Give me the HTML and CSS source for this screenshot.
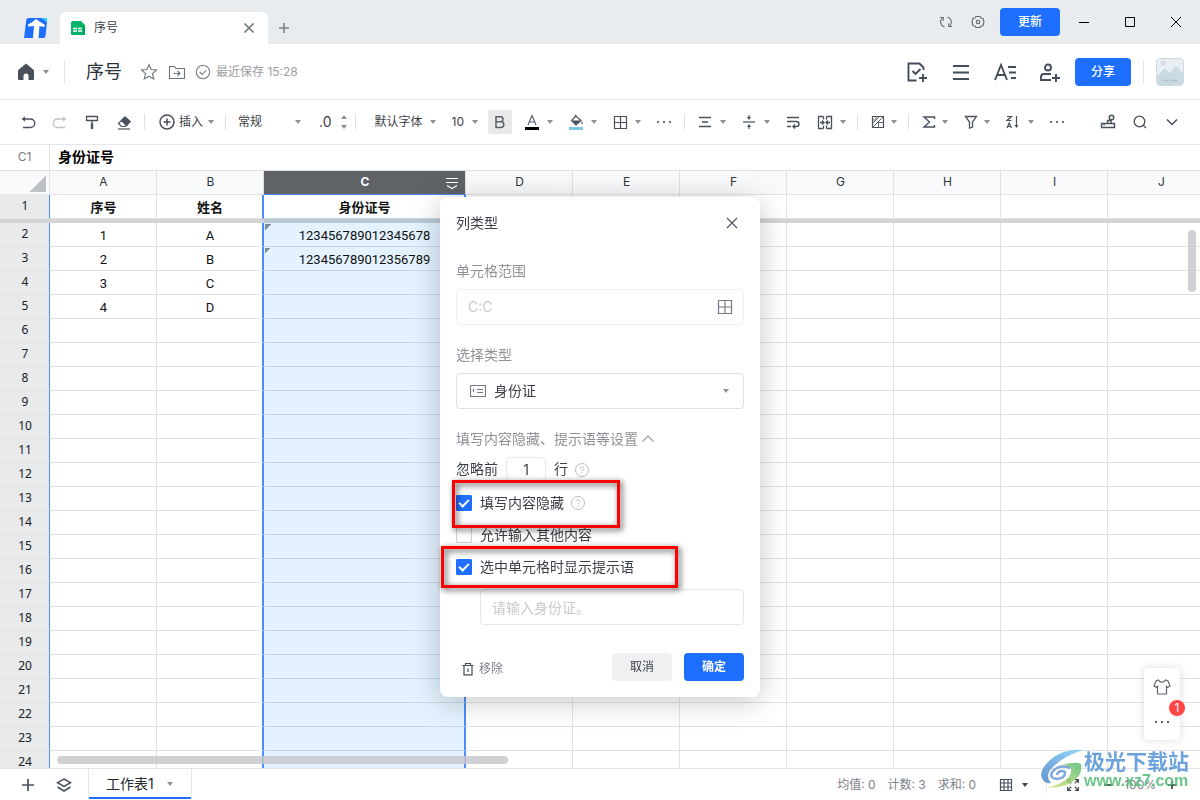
FILE: index.html
```html
<!DOCTYPE html>
<html lang="zh-CN">
<head>
<meta charset="utf-8">
<title>序号</title>
<link rel="stylesheet" href="styles.css">
</head>
<body>
<svg class="defs" aria-hidden="true">
  <symbol id="caret" viewBox="0 0 8 8"><path d="M1 2h6L4 6z" fill="currentColor"/></symbol>
  <symbol id="dots" viewBox="0 0 20 20"><path d="M3 9h2v2H3zM9 9h2v2H9zM15 9h2v2h-2z" fill="currentColor"/></symbol>
  <symbol id="help" viewBox="0 0 16 16"><g fill="none" stroke="currentColor"><circle cx="8" cy="8" r="6.5"/><path d="M6.2 6.6c0-2.4 3.6-2.2 3.6 0 0 1.2-1.8 1.3-1.8 2.6M8 10.2v1.2"/></g></symbol>
  <symbol id="colmenu" viewBox="0 0 14 14"><path d="M1 2.5h12M1 6.5h12M2 9.5l5 3 5-3" fill="none" stroke="currentColor" stroke-width="1.2"/></symbol>
</svg>

<header class="titlebar">
  <svg class="logo" viewBox="0 0 24 22"><path d="M4.500 1H18l5 4-1.500 14q-.2 2-2 2H0L2.300 3Q2.500 1 4.500 1z" fill="#1e6fff"/><path d="M18 1h4q1.500 0 1.200 1.500L22.800 5z" fill="#1fd0f0"/><path d="M4 7.500q4-1.500 8-5.500l9 6-1 2-4.500-1L14.500 21H9l1-12-6 .5z" fill="#fff"/></svg>
  <div class="tab">
    <svg class="i16" viewBox="0 0 16 16"><path d="M3 1h8l4 4v9a1 1 0 0 1-1 1H2a1 1 0 0 1-1-1V3q0-2 2-2z" fill="#07b368"/><path d="M13.500 1.500v5H15V15h-1.500z" fill="#049a58"/><path d="M3 8.500h4M8 8.500h4M3 11h4M8 11h4" stroke="#fff" stroke-width="1.400"/></svg>
    <span class="tab-name">序号</span>
    <button class="plain" aria-label="关闭标签"><svg class="i16" viewBox="0 0 16 16"><path d="M3.500 3.500l9 9M12.500 3.500l-9 9" stroke="#6f7680" stroke-width="1.700"/></svg></button>
  </div>
  <button class="plain" aria-label="新建标签"><svg class="i16" viewBox="0 0 16 16"><path d="M8 3v10M3 8h10" stroke="#7c828b" stroke-width="1.600"/></svg></button>
  <div class="window-tools">
    <button class="plain" aria-label="刷新"><svg class="i16" viewBox="0 0 16 16" fill="none" stroke="#62676f" stroke-width="1.100"><path d="M6.500 13A5.300 5.300 0 0 1 4 4.300M2 3.500h3.300v3.300M9.500 3a5.300 5.300 0 0 1 2.500 8.700M14 12.500h-3.300V9.200"/></svg></button>
    <button class="plain" aria-label="设置"><svg class="i16" viewBox="0 0 16 16" fill="none" stroke="#62676f" stroke-width="1.100"><path d="M6 2.500h4l1 1.600 2 .2L14 8l-1 3.700-2 .2-1 1.600H6l-1-1.600-2-.2L2 8l1-3.700 2-.2z"/><circle cx="8" cy="8" r="1.700"/></svg></button>
  </div>
  <button class="primary update">更新</button>
  <div class="window-buttons">
    <button class="plain" aria-label="最小化"><svg class="i16" viewBox="0 0 16 16"><path d="M3 8.500h10" stroke="#000"/></svg></button>
    <button class="plain" aria-label="最大化"><svg class="i16" viewBox="0 0 16 16"><path d="M3.500 3.500h9v9h-9z" fill="none" stroke="#000"/></svg></button>
    <button class="plain" aria-label="关闭"><svg class="i16" viewBox="0 0 16 16"><path d="M3 3l10 10M13 3L3 13" stroke="#000"/></svg></button>
  </div>
</header>

<header class="docbar">
  <button class="plain home" aria-label="首页"><svg class="i20" viewBox="0 0 20 20"><path d="M10 1.500l8 6.800V17a1 1 0 0 1-1 1h-4.500v-4a2.500 2.500 0 0 0-5 0v4H3a1 1 0 0 1-1-1V8.300z" fill="#4a505b"/></svg><svg class="caret"><use href="#caret"/></svg></button>
  <span class="vline"></span>
  <h1 class="doc-title">序号</h1>
  <div class="doc-actions">
    <button class="plain" aria-label="收藏"><svg class="i20" viewBox="0 0 20 20"><path d="M10 2.500l2.200 5 5.300.5-4 3.600 1.200 5.400-4.700-2.800L5.300 17l1.200-5.400-4-3.600 5.300-.5z" fill="none" stroke="#6d7480" stroke-width="1.100"/></svg></button>
    <button class="plain" aria-label="移动"><svg class="i20" viewBox="0 0 20 20" fill="none" stroke="#6d7480" stroke-width="1.100"><path d="M2.500 16.500v-12h5l1.500 2h8.500v10zM6.500 11.500h6M10.500 9l2.500 2.500-2.500 2.500"/></svg></button>
  </div>
  <span class="saved"><svg class="i16" viewBox="0 0 16 16" fill="none" stroke="#7b818b" stroke-width="1.100"><circle cx="8" cy="8" r="6.700"/><path d="M4.800 8l2.500 2.500 4-4.300"/></svg>最近保存 15:28</span>
  <div class="doc-tools">
    <button class="plain" aria-label="待办"><svg class="i24" viewBox="0 0 24 24" fill="none" stroke="#454c59" stroke-width="1.900"><path d="M18.500 10V7.500l-4-4H3.500v17h8M7.500 11l3 3 5-5M18 14v8M14 18h8"/></svg></button>
    <button class="plain" aria-label="菜单"><svg class="i24" viewBox="0 0 24 24"><path d="M4 6h16M4 12.500h16M4 19h16" stroke="#454c59" stroke-width="1.900"/></svg></button>
    <button class="plain" aria-label="文字"><svg class="i24" viewBox="0 0 24 24" fill="none" stroke="#454c59" stroke-width="1.900"><path d="M2 20L8 5l6 15M4 15h8M15 7h8M16 12.500h7M18 18h5"/></svg></button>
    <button class="plain" aria-label="协作者"><svg class="i24" viewBox="0 0 24 24" fill="none" stroke="#454c59" stroke-width="1.900"><circle cx="11" cy="7.500" r="3"/><path d="M14 20H4v-3q0-3 3-3h7M19 14v8M15 18h8"/></svg></button>
  </div>
  <button class="primary share">分享</button>
  <span class="vline"></span>
  <svg class="avatar" viewBox="0 0 28 28"><rect x=".5" y=".5" width="27" height="27" rx="3.500" fill="#e9eff3" stroke="#cddce2"/><circle cx="7" cy="5" r="2.500" fill="#cfdde4"/><path d="M1 18l8-8 5 5 6-7 7 7v9q0 3-3 3H4q-3 0-3-3z" fill="#c9dae2"/><path d="M6 22.500h2M9 22.500h3M13 22.500h2M16 22.500h6" stroke="#adc0c9" stroke-width="1.500"/></svg>
</header>

<div class="toolbar" role="toolbar">
  <div class="group">
    <button class="plain" aria-label="撤销"><svg class="i20" viewBox="0 0 20 20"><path d="M5 7h7.500a4 4 0 0 1 0 8.500H5" fill="none" stroke="#4a505c" stroke-width="1.400"/><path d="M3.500 7l3.500-2.500v5z" fill="#4a505c"/></svg></button>
    <button class="plain" aria-label="重做"><svg class="i20" viewBox="0 0 20 20"><path d="M15 7H7.500a4 4 0 0 0 0 8.500H15" fill="none" stroke="#bfc2c7" stroke-width="1.400"/><path d="M16.500 7L13 4.500v5z" fill="#bfc2c7"/></svg></button>
    <button class="plain" aria-label="格式刷"><svg class="i20" viewBox="0 0 20 20" fill="none" stroke="#4a505c" stroke-width="1.300"><path d="M4.500 4.500h11v4h-11zM10 8.500V12"/><path d="M10 11.500V17" stroke-width="2.400"/></svg></button>
    <button class="plain" aria-label="清除格式"><svg class="i20" viewBox="0 0 20 20" fill="none" stroke="#4a505c" stroke-width="1.200"><path d="M4.500 11.500L11 5l5 4.500-5 5H7.500z"/><path d="M7.500 8.500L11 5l5 4.500-3.500 4z" fill="#4a505c"/><path d="M4 17h12"/></svg></button>
  </div>
  <span class="sep"></span>
  <button class="plain insert"><svg class="i20" viewBox="0 0 20 20" fill="none" stroke="#4a505c" stroke-width="1.500"><circle cx="10" cy="10" r="7"/><path d="M10 6.500v7M6.500 10h7"/></svg><span>插入</span><svg class="caret"><use href="#caret"/></svg></button>
  <span class="sep"></span>
  <label class="pick pick-format"><select aria-label="数字格式"><option>常规</option></select><svg class="caret"><use href="#caret"/></svg></label>
  <button class="plain decimals" aria-label="小数位数"><span>.0</span><svg viewBox="0 0 8 16" width="8" height="16"><path d="M1 5h6L4 1zM1 11h6l-3 4z" fill="#8d9196"/></svg></button>
  <span class="sep"></span>
  <label class="pick pick-font"><select aria-label="字体"><option>默认字体</option></select><svg class="caret"><use href="#caret"/></svg></label>
  <label class="pick pick-size"><select aria-label="字号"><option>10</option></select><svg class="caret"><use href="#caret"/></svg></label>
  <button class="bold" aria-label="加粗" aria-pressed="true"><svg class="i20" viewBox="0 0 20 20"><path d="M6 4.800h4.500a2.500 2.500 0 0 1 0 5H6zm0 5h5a2.800 2.800 0 0 1 0 5.600H6z" fill="none" stroke="#5a606b" stroke-width="1.500"/></svg></button>
  <div class="group">
    <button class="plain drop" aria-label="字体颜色"><svg class="i20" viewBox="0 0 20 20"><path d="M6 13L10 3.500 14 13M7.500 10h5" fill="none" stroke="#5a606b" stroke-width="1.200"/><path d="M3 15h14v3H3z"/></svg><svg class="caret"><use href="#caret"/></svg></button>
    <button class="plain drop" aria-label="填充颜色"><svg class="i20" viewBox="0 0 20 20"><path d="M10 4L5.500 8.500l4.500 4.500 5-4.500zM9 3l2 2" fill="none" stroke="#4a505c" stroke-width="1.200"/><path d="M5.500 8.500h9.500l-5 4.500zM16 9q1.500 3 0 3t0-3" fill="#4a505c"/><path d="M3 15h14v3H3z" fill="#77cbe8"/></svg><svg class="caret"><use href="#caret"/></svg></button>
    <button class="plain drop" aria-label="边框"><svg class="i20" viewBox="0 0 20 20"><path d="M4.500 4.500h12v12h-12zM10.500 4.500v12M4.500 10.500h12" fill="none" stroke="#4a505c" stroke-width="1.200"/></svg><svg class="caret"><use href="#caret"/></svg></button>
    <button class="plain" aria-label="更多样式"><svg class="i20"><use href="#dots"/></svg></button>
  </div>
  <span class="sep"></span>
  <div class="group">
    <button class="plain drop" aria-label="水平对齐"><svg class="i20" viewBox="0 0 20 20"><path d="M4 5.500h12M7 10h6M4 14.500h12" stroke="#4a505c" stroke-width="1.400"/></svg><svg class="caret"><use href="#caret"/></svg></button>
    <button class="plain drop" aria-label="垂直对齐"><svg class="i20" viewBox="0 0 20 20"><path d="M4 10h12M10 3v3M10 14v3" stroke="#6b717b" stroke-width="1.400"/><path d="M8 5h4l-2 3zM8 15h4l-2-3z" fill="#4a505c"/></svg><svg class="caret"><use href="#caret"/></svg></button>
    <button class="plain" aria-label="自动换行"><svg class="i20" viewBox="0 0 20 20" fill="none" stroke="#4a505c" stroke-width="1.400"><path d="M4 5.500h12M4 9.500h9.500a2.500 2.500 0 0 1 0 5H10M12 12.500l-2 2 2 2M4 14.500h4"/></svg></button>
    <button class="plain drop" aria-label="合并单元格"><svg class="i20" viewBox="0 0 20 20" fill="none" stroke="#4a505c" stroke-width="1.300"><path d="M8.500 4.500h-5v12h5M11.500 4.500h5v12h-5M8.500 4.500v3M11.500 4.500v3M8.500 13.500v3M11.500 13.500v3M5 10.500h3.500M15 10.500h-3.500M7 8.500l2 2-2 2M13 8.500l-2 2 2 2"/></svg><svg class="caret"><use href="#caret"/></svg></button>
  </div>
  <span class="sep"></span>
  <button class="plain drop tight" aria-label="条件格式"><svg class="i20" viewBox="0 0 20 20" fill="none" stroke="#5f6570"><path d="M4.500 4.500h11v11h-11z" stroke="#4a505c" stroke-width="1.200"/><path d="M10.500 10v5.500M10 10.500h5.500M8 4.500v3M4.500 8h3M4.500 15.500l11-11M4.500 11.500l7-7"/></svg><svg class="caret"><use href="#caret"/></svg></button>
  <span class="sep"></span>
  <div class="group">
    <button class="plain drop tight" aria-label="求和"><svg class="i20" viewBox="0 0 20 20"><path d="M15.500 7V5H5l5.500 5L5 15h10.500v-2" fill="none" stroke="#4a505c" stroke-width="1.400"/></svg><svg class="caret"><use href="#caret"/></svg></button>
    <button class="plain drop tight" aria-label="筛选"><svg class="i20" viewBox="0 0 20 20"><path d="M4.500 4.500h11L11.500 10v5l-3 1v-6z" fill="none" stroke="#4a505c" stroke-width="1.300"/></svg><svg class="caret"><use href="#caret"/></svg></button>
    <button class="plain drop" aria-label="排序"><svg class="i20" viewBox="0 0 20 20" fill="none" stroke="#4a505c" stroke-width="1.200"><path d="M4 4.500h4.500L4 8.500h4.500M4 16l2.200-5 2.300 5M5 14.500h2.500M13.500 4v11"/><path d="M11.500 13h4l-2 3z" fill="#4a505c" stroke="none"/></svg><svg class="caret"><use href="#caret"/></svg></button>
    <button class="plain" aria-label="更多"><svg class="i20"><use href="#dots"/></svg></button>
  </div>
  <div class="group group-end">
    <button class="plain" aria-label="画笔"><svg class="i20" viewBox="0 0 20 20" fill="none" stroke="#4a505c" stroke-width="1.400"><path d="M3.500 11.500h13v4h-13zM9.500 11.500v-3h4M6 11.500v2"/><circle cx="13.500" cy="5.500" r="2.300"/><path d="M13 8v3.500"/></svg></button>
    <button class="plain" aria-label="搜索"><svg class="i20" viewBox="0 0 20 20" fill="none" stroke="#4a505c" stroke-width="1.300"><circle cx="9.500" cy="9.500" r="5.300"/><path d="M13 13l3 3"/></svg></button>
    <button class="plain" aria-label="收起"><svg class="i20" viewBox="0 0 20 20"><path d="M5 7.500l5 5 5-5" fill="none" stroke="#4a505c" stroke-width="1.500"/></svg></button>
  </div>
</div>

<div class="formula-bar"><span class="cell-name">C1</span><span class="cell-value">身份证号</span></div>

<main class="sheet">
  <table class="grid">
    <colgroup><col class="c-head"><col><col><col class="c-wide"><col><col><col><col><col><col><col></colgroup>
    <thead>
      <tr><th class="corner"></th><th>A</th><th>B</th><th class="picked">C<svg class="colmenu"><use href="#colmenu"/></svg></th><th>D<svg class="colmenu faint"><use href="#colmenu"/></svg></th><th>E</th><th>F</th><th>G</th><th>H</th><th>I</th><th>J</th></tr>
    </thead>
    <tbody>
      <tr class="first"><th>1</th><td>序号</td><td>姓名</td><td>身份证号</td><td></td><td></td><td></td><td></td><td></td><td></td><td></td></tr>
      <tr class="freeze"><td></td><td></td><td></td><td></td><td></td><td></td><td></td><td></td><td></td><td></td><td></td></tr>
      <tr><th>2</th><td>1</td><td>A</td><td class="as-text">123456789012345678</td><td></td><td></td><td></td><td></td><td></td><td></td><td></td></tr>
      <tr><th>3</th><td>2</td><td>B</td><td class="as-text">123456789012356789</td><td></td><td></td><td></td><td></td><td></td><td></td><td></td></tr>
      <tr><th>4</th><td>3</td><td>C</td><td></td><td></td><td></td><td></td><td></td><td></td><td></td><td></td></tr>
      <tr><th>5</th><td>4</td><td>D</td><td></td><td></td><td></td><td></td><td></td><td></td><td></td><td></td></tr>
      <tr><th>6</th><td></td><td></td><td></td><td></td><td></td><td></td><td></td><td></td><td></td><td></td></tr>
      <tr><th>7</th><td></td><td></td><td></td><td></td><td></td><td></td><td></td><td></td><td></td><td></td></tr>
      <tr><th>8</th><td></td><td></td><td></td><td></td><td></td><td></td><td></td><td></td><td></td><td></td></tr>
      <tr><th>9</th><td></td><td></td><td></td><td></td><td></td><td></td><td></td><td></td><td></td><td></td></tr>
      <tr><th>10</th><td></td><td></td><td></td><td></td><td></td><td></td><td></td><td></td><td></td><td></td></tr>
      <tr><th>11</th><td></td><td></td><td></td><td></td><td></td><td></td><td></td><td></td><td></td><td></td></tr>
      <tr><th>12</th><td></td><td></td><td></td><td></td><td></td><td></td><td></td><td></td><td></td><td></td></tr>
      <tr><th>13</th><td></td><td></td><td></td><td></td><td></td><td></td><td></td><td></td><td></td><td></td></tr>
      <tr><th>14</th><td></td><td></td><td></td><td></td><td></td><td></td><td></td><td></td><td></td><td></td></tr>
      <tr><th>15</th><td></td><td></td><td></td><td></td><td></td><td></td><td></td><td></td><td></td><td></td></tr>
      <tr><th>16</th><td></td><td></td><td></td><td></td><td></td><td></td><td></td><td></td><td></td><td></td></tr>
      <tr><th>17</th><td></td><td></td><td></td><td></td><td></td><td></td><td></td><td></td><td></td><td></td></tr>
      <tr><th>18</th><td></td><td></td><td></td><td></td><td></td><td></td><td></td><td></td><td></td><td></td></tr>
      <tr><th>19</th><td></td><td></td><td></td><td></td><td></td><td></td><td></td><td></td><td></td><td></td></tr>
      <tr><th>20</th><td></td><td></td><td></td><td></td><td></td><td></td><td></td><td></td><td></td><td></td></tr>
      <tr><th>21</th><td></td><td></td><td></td><td></td><td></td><td></td><td></td><td></td><td></td><td></td></tr>
      <tr><th>22</th><td></td><td></td><td></td><td></td><td></td><td></td><td></td><td></td><td></td><td></td></tr>
      <tr><th>23</th><td></td><td></td><td></td><td></td><td></td><td></td><td></td><td></td><td></td><td></td></tr>
      <tr><th>24</th><td></td><td></td><td></td><td></td><td></td><td></td><td></td><td></td><td></td><td></td></tr>
    </tbody>
  </table>
  <div class="scroll-x"></div>
  <div class="scroll-y"></div>
  <aside class="float-tools">
    <button class="plain" aria-label="皮肤"><svg class="i20" viewBox="0 0 20 20"><path d="M6.500 3l1 1.300q2.500 1.600 5 0l1-1.300 2.500 1 2 5-2.500 1.500-1-1V17h-9V9.500l-1 1L2 9l2-5z" fill="none" stroke="#5f6570" stroke-width="1.200"/></svg></button>
    <button class="plain" aria-label="更多工具"><svg class="i20"><use href="#dots"/></svg></button>
    <span class="badge">1</span>
  </aside>
</main>

<footer class="statusbar">
  <div class="sheet-tools">
    <button class="plain" aria-label="添加工作表"><svg class="i20" viewBox="0 0 20 20"><path d="M10 4v12M4 10h12" stroke="#4a505c" stroke-width="1.700"/></svg></button>
    <button class="plain" aria-label="全部工作表"><svg class="i20" viewBox="0 0 20 20" fill="none" stroke="#4a505c" stroke-width="1.500"><path d="M10 4l6.500 3.700L10 11.500 3.500 7.700zM3.500 12L10 16l6.500-4"/></svg></button>
  </div>
  <button class="sheet-tab">工作表1<svg class="caret"><use href="#caret"/></svg></button>
  <div class="stats"><span>均值: 0</span><span>计数: 3</span><span>求和: 0</span></div>
  <button class="plain view-mode" aria-label="视图"><svg class="i16" viewBox="0 0 16 16" fill="none" stroke="#4a505c" stroke-width="1.200"><path d="M2.500 2.500h11v11h-11zM2.500 6h11M2.500 10h11M6 2.500v11M10 2.500v11"/></svg><svg class="caret"><use href="#caret"/></svg></button>
  <span class="vline short"></span>
  <button class="plain full" aria-label="全屏"><svg class="i16" viewBox="0 0 16 16" fill="none" stroke="#3f4550" stroke-width="1.200"><path d="M6 2.700H2.700V6M10 2.700h3.300V6M6 13.300H2.700V10M10 13.300h3.300V10M2.700 2.700L6.300 6.300M13.300 2.700L9.700 6.300M2.700 13.300l3.600-3.600M13.300 13.300L9.700 9.700"/></svg></button>
  <div class="zoom">
    <button class="plain" aria-label="缩小"><svg class="i16" viewBox="0 0 16 16"><path d="M4 8h8" stroke="#3f4550" stroke-width="1.700"/></svg></button>
    <span>100%</span>
    <button class="plain" aria-label="放大"><svg class="i16" viewBox="0 0 16 16"><path d="M4 8h8M8 4v8" stroke="#3f4550" stroke-width="1.700"/></svg></button>
  </div>
</footer>

<div class="layer">
  <form class="dialog" role="dialog" aria-labelledby="dlg-title">
    <div class="dialog-head"><h2 id="dlg-title">列类型</h2><button type="button" class="plain" aria-label="关闭对话框"><svg class="i16" viewBox="0 0 16 16"><path d="M3 3l10 10M13 3L3 13" stroke="#4a505c" stroke-width="1.100"/></svg></button></div>
    <label class="caption caption-first" for="range">单元格范围</label>
    <div class="field pale"><input id="range" type="text" placeholder="C:C" disabled><svg class="i16" viewBox="0 0 16 16"><path d="M1.500 1.500h13v13h-13zM8 1.500v13M1.500 8h13" fill="none" stroke="#747b86" stroke-width="1.200"/></svg></div>
    <label class="caption" for="kind">选择类型</label>
    <div class="field"><svg class="i16" viewBox="0 0 16 16"><path d="M.5 2.500h15v11H.5zM3.500 6v3M7 6.500h6M7 9.500h6" fill="none" stroke="#747b86" stroke-width="1.200"/></svg><select id="kind"><option>身份证</option></select><svg class="caret"><use href="#caret"/></svg></div>
    <button type="button" class="plain fold">填写内容隐藏、提示语等设置<svg viewBox="0 0 14 14" width="14" height="14"><path d="M1.500 9.500L7 4l5.500 5.500" fill="none" stroke="#a0a4aa" stroke-width="1.200"/></svg></button>
    <div class="skip"><label for="skip">忽略前</label><input id="skip" type="text" value="1"><span>行</span><svg class="i16 help"><use href="#help"/></svg></div>
    <div class="checks">
      <label class="check"><input type="checkbox" checked>填写内容隐藏<svg class="i16 help"><use href="#help"/></svg></label>
      <label class="check"><input type="checkbox">允许输入其他内容</label>
      <label class="check"><input type="checkbox" checked>选中单元格时显示提示语</label>
    </div>
    <input class="hint" type="text" placeholder="请输入身份证。" aria-label="提示语">
    <div class="dialog-foot">
      <button type="button" class="plain remove"><svg class="i16" viewBox="0 0 16 16" fill="none" stroke="#4a505c" stroke-width="1.200"><path d="M2.500 4.500h11M5.500 4V2.500h5V4M4 4.500v9.300h8V4.500M8 7.500v3.500"/></svg>移除</button>
      <button type="button" class="secondary">取消</button>
      <button type="button" class="primary ok">确定</button>
    </div>
    <div class="mark mark-hide"></div>
    <div class="mark mark-hint"></div>
  </form>
</div>

<div class="stamp">
  <svg viewBox="0 0 44 40" width="44" height="40"><defs><linearGradient id="sky" x1="1" y1="0" x2="0" y2="1"><stop offset="0" stop-color="#7cd3f8"/><stop offset="1" stop-color="#4f84cc"/></linearGradient><linearGradient id="leaf" x1="1" y1="0" x2="0" y2="1"><stop offset="0" stop-color="#55bd74"/><stop offset="1" stop-color="#e0e27a"/></linearGradient></defs><path d="M43 1Q24-1 10 11-3 23 3 31q3 4 8 3-7-8 3-17Q24 7 43 1z" fill="url(#sky)"/><path d="M22 16q14-4 19-1 2 9-6 16-10 8-29 8 17-4 23-11 5-8-1-11-3-1-6-1z" fill="url(#leaf)"/><path d="M30 19q-10-4-17 3-5 7 4 8 8-1 8-6 0-2-3-2-4 0-5 4" fill="none" stroke="#6a9bd6" stroke-width="2.500"/></svg>
  <div class="stamp-text"><span class="stamp-name">极光下载站</span><span class="stamp-url">www.xz7.com</span></div>
</div>
</body>
</html>
```
FILE: styles.css
```css
* { box-sizing: border-box; }
body {
  margin: 0;
  height: 100vh;
  display: flex;
  flex-direction: column;
  overflow: hidden;
  background: #fff;
  color: #3c4048;
  font: 12px/20px Inter, "Noto Sans CJK SC", sans-serif;
}
button, input, select { font: inherit; color: inherit; }
svg { display: block; flex: none; }
h1, h2 { margin: 0; font-weight: 400; }
.defs { position: absolute; width: 0; height: 0; }
.i16 { width: 16px; height: 16px; }
.i20 { width: 20px; height: 20px; }
.i24 { width: 24px; height: 24px; }
.caret { width: 8px; height: 8px; color: #8d9196; }
.plain { display: flex; align-items: center; padding: 0; border: 0; background: none; }
.primary { border: 0; border-radius: 4px; padding: 0; height: 28px; background: #1e6fff; color: #fff; font-weight: 500; }
.vline { width: 1px; height: 24px; background: #e6e7ea; }

/* window title bar */
.titlebar { display: flex; align-items: center; flex: none; height: 44px; padding: 0 16px 0 24px; background: #e9ecef; }
.logo { width: 24px; height: 22px; margin: 12px 12px 0 0; }
.tab { display: flex; align-items: center; align-self: flex-end; width: 208px; height: 32px; margin-right: 8px; padding: 0 11px 0 10px; border-radius: 6px 6px 0 0; background: #fff; }
.tab-name { flex: 1; margin-left: 8px; }
.titlebar > .plain { margin-top: 12px; }
.window-tools { display: flex; gap: 16px; margin: 0 14px 0 auto; }
.update { width: 60px; }
.window-buttons { display: flex; gap: 30px; margin-left: 16px; }

/* document bar */
.docbar { display: flex; align-items: center; flex: none; height: 56px; padding: 0 16px; border-bottom: 1px solid #e6e7ea; }
.home { gap: 6px; margin-right: 14px; }
.doc-title { margin: 0 17px 0 21px; font-size: 18px; line-height: 28px; color: #2b2f36; }
.doc-actions { display: flex; gap: 8px; }
.saved { display: flex; align-items: center; gap: 5px; margin-left: 8px; color: #9a9da3; }
.doc-tools { display: flex; gap: 20px; margin: 0 14px 0 auto; }
.share { width: 56px; margin-right: 12px; }
.avatar { width: 28px; height: 28px; margin-left: 12px; }

/* toolbar */
.toolbar { display: flex; align-items: center; flex: none; height: 45px; padding: 0 18px; border-bottom: 1px solid #e6e7ea; }
.group { display: flex; align-items: center; gap: 12px; color: #6b717b; }
.group-end { margin-left: auto; }
.sep { width: 1px; height: 16px; margin: 0 10px; background: #dfe0e3; }
.drop { gap: 4px; }
.tight { gap: 2px; }
.insert { margin-left: 2px; }
.insert span { margin: 0 4px 0 2px; }
.pick { display: flex; align-items: center; }
.pick select { appearance: none; flex: 1; min-width: 0; padding: 0; border: 0; background: none; }
.pick-format { width: 64px; margin: 0 17px 0 2px; }
.pick-font { width: 62px; margin: 0 15px 0 9px; }
.pick-size { width: 27px; margin-right: 9px; }
.decimals { gap: 8px; margin-right: -3px; font-size: 14px; }
.bold { display: flex; align-items: center; justify-content: center; width: 24px; height: 24px; margin-right: 10px; padding: 0; border: 0; border-radius: 2px; background: #e9e9ea; }

.formula-bar { display: flex; align-items: center; flex: none; height: 26px; border-bottom: 1px solid #dfe1e5; }
.cell-name { width: 50px; height: 25px; line-height: 24px; border-right: 1px solid #dfe1e5; text-align: center; color: #777b82; }
.cell-value { padding: 0 0 2px 8px; font-size: 14px; font-weight: 700; color: #000; }

/* grid */
.sheet { position: relative; flex: 1; min-height: 0; overflow: hidden; }
.grid { width: 100%; min-width: 1215px; table-layout: fixed; border-spacing: 0; }
.grid col { width: 107px; }
.grid .c-head { width: 50px; }
.grid .c-wide { width: 202px; }
.grid th, .grid td { height: 24px; padding: 0; border: 0 solid #e1e2e6; border-width: 0 1px 1px 0; line-height: 20px; text-align: center; font-weight: 400; color: #202124; }
.grid th { padding: 0 0 2px 1px; }
.grid thead th { position: relative; background: #f9fafc; color: #303338; }
.grid .corner { background: linear-gradient(135deg, transparent 50%, #bdc0c5 50%) 30px 5px / 16px 16px no-repeat #f9fafc; }
.grid thead .picked { background: #5f6368; color: #fff; font-weight: 700; border-bottom-color: #4b8df8; }
.colmenu { position: absolute; right: 6px; top: 5px; width: 14px; height: 14px; }
.faint { color: #fff; }
.grid tbody th { background: #e8eaec; border-right-color: #4b8df8; font-family: "Noto Sans", sans-serif; }
.grid tbody td { padding: 3px 0 0 1px; font: 13px/20px Roboto, "Noto Sans CJK SC", sans-serif; color: #111; }
.grid tbody td:nth-child(3), .grid tbody td:nth-child(4) { border-right: 2px solid #4b8df8; }
.grid tbody td:nth-child(4) { background-color: #e3f2fe; border-bottom-color: #c8d6e4; }
.grid tbody .first td { font-weight: 700; }
.grid tbody .first td:nth-child(4) { background: #fff; }
.grid tbody .freeze td { height: 4px; padding: 0; border-bottom: 0; border-right-color: #d4d4d4; background: #d4d4d4; line-height: 0; }
.grid tbody .freeze td:nth-child(4) { background: #b9c8d3; }
.grid .as-text { background: linear-gradient(135deg, #7b8da0 50%, transparent 50%) 1px 1px / 6px 6px no-repeat; }

.scroll-x, .scroll-y { position: absolute; border-radius: 4px; background: rgba(200, 201, 206, .85); }
.scroll-x { left: 57px; right: 692px; bottom: 4px; height: 8px; }
.scroll-y { right: 4px; top: 59px; width: 8px; height: 62px; }
.float-tools { position: absolute; right: 20px; bottom: 28px; display: flex; flex-direction: column; align-items: center; gap: 15px; width: 36px; padding: 9px 0 8px; border-radius: 4px; background: #fff; box-shadow: 0 0 8px rgba(0, 0, 0, .15); color: #5f6570; }
.badge { position: absolute; right: -5px; top: 32px; width: 16px; height: 16px; border-radius: 8px; background: #ff4545; color: #fff; line-height: 16px; text-align: center; }

/* status bar */
.statusbar { display: flex; align-items: center; flex: none; height: 32px; padding: 0 20px 0 18px; border-top: 1px solid #e1e2e6; }
.sheet-tools { display: flex; gap: 16px; margin-right: 14px; }
.sheet-tab { display: flex; align-items: center; gap: 12px; height: 30px; align-self: flex-start; padding: 0 17px; border: 1px solid #e6e7ea; border-width: 0 1px; box-shadow: inset 0 -2px #1e6fff; background: #fff; font-size: 14px; color: #26292e; }
.stats { display: flex; gap: 12px; margin-left: auto; color: #7d8087; }
.view-mode { gap: 7px; margin: 0 17px 0 22px; }
.view-mode .caret { color: #3f4550; }
.short { height: 16px; }
.full { margin: 0 19px 0 18px; }
.zoom { display: flex; align-items: center; gap: 8px; color: #7d8087; }

/* column type dialog */
.layer { position: fixed; inset: 0; display: flex; justify-content: center; align-items: flex-start; padding-top: 197px; pointer-events: none; }
.dialog { position: relative; display: flex; flex-direction: column; width: 320px; padding: 16px; border-radius: 8px; background: #fff; box-shadow: 0 4px 30px rgba(0, 0, 0, .22); font-size: 14px; pointer-events: auto; }
.dialog-head { display: flex; justify-content: space-between; align-items: center; height: 20px; padding-right: 4px; }
.dialog h2 { font-size: 14px; }
.caption { margin: 20px 0 8px; color: #8f9297; }
.caption-first { margin-top: 28px; }
.field { display: flex; align-items: center; height: 36px; padding: 0 10px 0 13px; border: 1px solid #dedfe2; border-radius: 4px; }
.field input, .field select { appearance: none; flex: 1; min-width: 0; padding: 0; border: 0; outline: 0; background: none; opacity: 1; }
.field select { margin-left: 8px; }
.field .caret { margin-right: 3px; }
.pale { padding-left: 11px; border-color: #f0f1f2; }
.dialog ::placeholder { color: #c8cace; opacity: 1; }
.fold { gap: 3px; height: 20px; margin-top: 20px; color: #8f9297; }
.skip { display: flex; align-items: center; gap: 8px; height: 24px; margin-top: 8px; }
.skip input { width: 40px; height: 24px; padding: 0; border: 1px solid #e6e7ea; border-radius: 4px; text-align: center; }
.help { color: #b9bcc1; }
.skip .help { margin: 2px 0 0 -2px; }
.checks { display: flex; flex-direction: column; gap: 12px; margin-top: 12px; }
.check { display: flex; align-items: center; }
.check input { appearance: none; position: relative; width: 16px; height: 16px; margin: 0 8px 0 0; border: 1px solid #d0d2d6; border-radius: 1px; }
.check input:checked { border-color: #1e6fff; background: #1e6fff; }
.check input:checked::before { content: ""; position: absolute; left: 3px; top: 2px; width: 8px; height: 4px; border: solid #fff; border-width: 0 0 2px 2px; transform: rotate(-45deg); box-sizing: content-box; margin: 1px 0 0 -1px; }
.check .help { margin-left: 6px; }
.hint { height: 36px; margin: 12px 0 28px 24px; padding: 0 11px; border: 1px solid #e6e7ea; border-radius: 4px; }
.dialog-foot { display: flex; gap: 12px; font-size: 12px; }
.remove { gap: 3px; margin: 4px auto 0 4px; color: #7d8087; }
.secondary { width: 60px; height: 28px; padding: 0; border: 0; border-radius: 4px; background: #eff0f2; }
.ok { width: 60px; font-weight: 700; }
.mark { position: absolute; border: 3px solid #f00; filter: drop-shadow(2px 2px 3px rgba(0, 0, 0, .75)); }
.mark-hide { left: 12px; top: 283px; width: 168px; height: 48px; }
.mark-hint { left: 1px; top: 349px; width: 237px; height: 42px; }

/* site stamp */
.stamp { position: fixed; right: 11px; bottom: 9px; display: flex; opacity: .85; pointer-events: none; }
.stamp-text { display: flex; flex-direction: column; }
.stamp-name { font: 700 21px/22px "Noto Sans CJK SC", sans-serif; color: #5393d6; }
.stamp-url { font: 700 16px/20px "Liberation Sans", sans-serif; color: #50bd72; }
```
